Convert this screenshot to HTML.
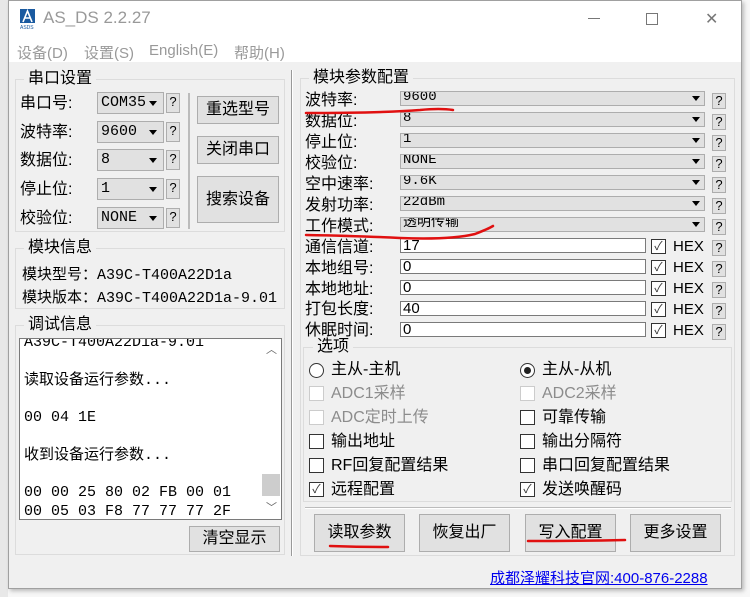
<!DOCTYPE html>
<html><head><meta charset="utf-8"><style>
*{margin:0;padding:0;box-sizing:border-box}
body{width:750px;height:597px;overflow:hidden;background:#f7f7f7;font-family:"Liberation Sans","Noto Sans CJK SC",sans-serif;color:#000;position:relative}
.a{position:absolute;white-space:nowrap}
.m{font-family:"Liberation Mono","Noto Sans CJK SC",monospace}
.win{position:absolute;left:8px;top:0;width:734px;height:589px;background:#f0f0f0;border:1px solid #a0a0a0;box-shadow:2px 2px 4px rgba(0,0,0,.25)}
.title{position:absolute;left:8px;top:0;width:734px;height:62px;background:#fff;border:1px solid #a0a0a0;border-bottom:none}
.t{font-size:15px;line-height:20px}
.grp{position:absolute;border:1px solid #dcdcdc}
.gt{position:absolute;background:#f0f0f0;padding:0 4px;font-size:15px;line-height:18px}
.cb{position:absolute;background:#e1e1e1;border:1px solid #adadad;font-size:15px;line-height:20px;padding-left:3px;overflow:hidden;font-family:"Liberation Mono",monospace}
.cb:after{content:"";position:absolute;right:6px;top:50%;margin-top:-2px;border-left:4px solid transparent;border-right:4px solid transparent;border-top:5px solid #000}
.q{position:absolute;width:14px;background:#e1e1e1;border:1px solid #adadad;font-size:13px;text-align:center}
.btn{position:absolute;background:#e1e1e1;border:1px solid #adadad;font-size:16px;text-align:center}
.rc{position:absolute;background:#e1e1e1;border:1px solid #adadad;font-size:14px;line-height:11px;padding-left:2px;overflow:hidden;height:15px;font-family:"Liberation Mono","Noto Sans CJK SC",monospace}
.rc:after{content:"";position:absolute;right:4px;top:4px;border-left:4px solid transparent;border-right:4px solid transparent;border-top:5px solid #000}
.tf{position:absolute;background:#fff;border:1px solid #7a7a7a;font-size:15px;line-height:14px;padding-left:2px;overflow:hidden;height:15px;width:246px;left:400px}
.ck{position:absolute;width:15px;height:15px;border:1px solid #333;background:#fff;font-size:12px;line-height:13px;text-align:center;color:#333}
.dis{border-color:#ccc;color:#999}
.lab{font-size:16px;line-height:18px}
</style></head><body>
<div style="position:absolute;left:0;top:0;width:8px;height:597px;background:#e8e8e8"></div>
<div class="win"></div>
<div class="title"></div>
<div class="a" style="left:20px;top:9px;width:15px;height:20px;background:#fff">
<svg width="15" height="20"><rect x="0" y="0" width="15" height="14" fill="#1a5aa0"/><path d="M3 13 L7.5 2 L12 13 M5 9 H10" stroke="#fff" stroke-width="1.6" fill="none"/><text x="0" y="20" font-size="5" fill="#1a5aa0" font-family="Liberation Sans">ASDS</text></svg></div>
<div class="a" style="left:43px;top:8px;font-size:17px;color:#999">AS_DS 2.2.27</div>
<div class="a" style="left:588px;top:18px;width:12px;height:1px;background:#777"></div>
<div class="a" style="left:646px;top:13px;width:12px;height:12px;border:1px solid #777"></div>
<div class="a" style="left:705px;top:13px;font-size:16px;color:#777;line-height:14px">✕</div>
<div class="a" style="left:17px;top:42px;font-size:15px;color:#999">设备(D)</div>
<div class="a" style="left:84px;top:42px;font-size:15px;color:#999">设置(S)</div>
<div class="a" style="left:149px;top:42px;font-size:15px;color:#999">English(E)</div>
<div class="a" style="left:234px;top:42px;font-size:15px;color:#999">帮助(H)</div>

<div class="grp" style="left:15px;top:79px;width:270px;height:153px"></div>
<div class="gt a" style="left:24px;top:70px;font-size:16px">串口设置</div>
<div class="a lab" style="left:20px;top:95px">串口号:</div>
<div class="a lab" style="left:20px;top:124px">波特率:</div>
<div class="a lab" style="left:20px;top:152px">数据位:</div>
<div class="a lab" style="left:20px;top:181px">停止位:</div>
<div class="a lab" style="left:20px;top:210px">校验位:</div>
<div class="cb" style="left:97px;top:92px;width:67px;height:22px">COM35</div>
<div class="cb" style="left:97px;top:121px;width:67px;height:22px">9600</div>
<div class="cb" style="left:97px;top:149px;width:67px;height:22px">8</div>
<div class="cb" style="left:97px;top:178px;width:67px;height:22px">1</div>
<div class="cb" style="left:97px;top:207px;width:67px;height:22px">NONE</div>
<div class="q" style="left:166px;top:93px;height:20px">?</div>
<div class="q" style="left:166px;top:122px;height:20px">?</div>
<div class="q" style="left:166px;top:150px;height:20px">?</div>
<div class="q" style="left:166px;top:179px;height:20px">?</div>
<div class="q" style="left:166px;top:208px;height:20px">?</div>
<div class="a" style="left:188px;top:93px;width:2px;height:136px;background:#bbb"></div>
<div class="btn" style="left:197px;top:96px;width:82px;height:28px;line-height:26px">重选型号</div>
<div class="btn" style="left:197px;top:136px;width:82px;height:28px;line-height:26px">关闭串口</div>
<div class="btn" style="left:197px;top:176px;width:82px;height:47px;line-height:45px">搜索设备</div>

<div class="grp" style="left:15px;top:248px;width:270px;height:61px"></div>
<div class="gt a" style="left:24px;top:239px;font-size:16px">模块信息</div>
<div class="a m" style="left:22px;top:263px;font-size:15px">模块型号：A39C-T400A22D1a</div>
<div class="a m" style="left:22px;top:286px;font-size:15px;width:258px;overflow:hidden">模块版本：A39C-T400A22D1a-9.01</div>

<div class="grp" style="left:15px;top:325px;width:270px;height:230px"></div>
<div class="gt a" style="left:24px;top:316px;font-size:16px">调试信息</div>
<div class="a" style="left:19px;top:338px;width:263px;height:182px;background:#fff;border:1px solid #7a7a7a;overflow:hidden">
<div class="m" style="position:absolute;left:4px;top:-5px;font-size:15px;line-height:18.8px;white-space:pre">A39C-T400A22D1a-9.01

读取设备运行参数...

00 04 1E

收到设备运行参数...

00 00 25 80 02 FB 00 01
00 05 03 F8 77 77 77 2F</div>
<div style="position:absolute;right:0;top:0;width:20px;height:180px;background:#fff"></div>
<div style="position:absolute;right:1px;top:135px;width:18px;height:22px;background:#cdcdcd"></div>
<div style="position:absolute;right:4px;top:2px;font-size:11px;color:#666">︿</div>
<div style="position:absolute;right:4px;top:160px;font-size:11px;color:#666">﹀</div>
</div>
<div class="btn" style="left:189px;top:526px;width:91px;height:26px;line-height:24px">清空显示</div>

<div class="a" style="left:291px;top:70px;width:2px;height:486px;background:#999;border-right:1px solid #fff"></div>
<div class="grp" style="left:300px;top:78px;width:435px;height:478px"></div>
<div class="gt a" style="left:309px;top:69px;font-size:16px">模块参数配置</div>
<div class="a lab" style="left:305px;top:92px">波特率:</div>
<div class="a lab" style="left:305px;top:113px">数据位:</div>
<div class="a lab" style="left:305px;top:134px">停止位:</div>
<div class="a lab" style="left:305px;top:155px">校验位:</div>
<div class="a lab" style="left:305px;top:176px">空中速率:</div>
<div class="a lab" style="left:305px;top:197px">发射功率:</div>
<div class="a lab" style="left:305px;top:218px">工作模式:</div>
<div class="a lab" style="left:305px;top:239px">通信信道:</div>
<div class="a lab" style="left:305px;top:260px">本地组号:</div>
<div class="a lab" style="left:305px;top:281px">本地地址:</div>
<div class="a lab" style="left:305px;top:301px">打包长度:</div>
<div class="a lab" style="left:305px;top:322px">休眠时间:</div>
<div class="rc" style="left:400px;top:91px;width:305px">9600</div>
<div class="rc" style="left:400px;top:112px;width:305px">8</div>
<div class="rc" style="left:400px;top:133px;width:305px">1</div>
<div class="rc" style="left:400px;top:154px;width:305px">NONE</div>
<div class="rc" style="left:400px;top:175px;width:305px">9.6K</div>
<div class="rc" style="left:400px;top:196px;width:305px">22dBm</div>
<div class="rc" style="left:400px;top:217px;width:305px">透明传输</div>
<div class="tf" style="top:238px">17</div>
<div class="tf" style="top:259px">0</div>
<div class="tf" style="top:280px">0</div>
<div class="tf" style="top:301px">40</div>
<div class="tf" style="top:322px">0</div>
<div class="ck" style="left:651px;top:239px">✓</div><div class="a t" style="left:673px;top:237px;font-size:15px">HEX</div>
<div class="ck" style="left:651px;top:260px">✓</div><div class="a t" style="left:673px;top:258px;font-size:15px">HEX</div>
<div class="ck" style="left:651px;top:281px">✓</div><div class="a t" style="left:673px;top:279px;font-size:15px">HEX</div>
<div class="ck" style="left:651px;top:302px">✓</div><div class="a t" style="left:673px;top:300px;font-size:15px">HEX</div>
<div class="ck" style="left:651px;top:323px">✓</div><div class="a t" style="left:673px;top:321px;font-size:15px">HEX</div>
<div class="q" style="left:712px;top:93px;height:16px;line-height:14px">?</div>
<div class="q" style="left:712px;top:114px;height:16px;line-height:14px">?</div>
<div class="q" style="left:712px;top:135px;height:16px;line-height:14px">?</div>
<div class="q" style="left:712px;top:156px;height:16px;line-height:14px">?</div>
<div class="q" style="left:712px;top:177px;height:16px;line-height:14px">?</div>
<div class="q" style="left:712px;top:198px;height:16px;line-height:14px">?</div>
<div class="q" style="left:712px;top:219px;height:16px;line-height:14px">?</div>
<div class="q" style="left:712px;top:240px;height:16px;line-height:14px">?</div>
<div class="q" style="left:712px;top:261px;height:16px;line-height:14px">?</div>
<div class="q" style="left:712px;top:282px;height:16px;line-height:14px">?</div>
<div class="q" style="left:712px;top:303px;height:16px;line-height:14px">?</div>
<div class="q" style="left:712px;top:324px;height:16px;line-height:14px">?</div>

<div class="grp" style="left:303px;top:347px;width:429px;height:155px"></div>
<div class="gt a" style="left:313px;top:338px;font-size:16px">选项</div>
<div class="a" style="left:309px;top:363px;width:15px;height:15px;border:1px solid #333;border-radius:50%;background:#fff"></div>
<div class="a lab" style="left:331px;top:361px">主从-主机</div>
<div class="a" style="left:520px;top:363px;width:15px;height:15px;border:1px solid #333;border-radius:50%;background:#fff"><div style="margin:3px;width:7px;height:7px;border-radius:50%;background:#222"></div></div>
<div class="a lab" style="left:542px;top:361px">主从-从机</div>
<div class="ck dis" style="left:309px;top:386px"></div><div class="a lab" style="left:331px;top:385px;color:#8c8c8c">ADC1采样</div>
<div class="ck dis" style="left:520px;top:386px"></div><div class="a lab" style="left:542px;top:385px;color:#8c8c8c">ADC2采样</div>
<div class="ck dis" style="left:309px;top:410px"></div><div class="a lab" style="left:331px;top:409px;color:#8c8c8c">ADC定时上传</div>
<div class="ck" style="left:520px;top:410px"></div><div class="a lab" style="left:542px;top:409px">可靠传输</div>
<div class="ck" style="left:309px;top:434px"></div><div class="a lab" style="left:331px;top:433px">输出地址</div>
<div class="ck" style="left:520px;top:434px"></div><div class="a lab" style="left:542px;top:433px">输出分隔符</div>
<div class="ck" style="left:309px;top:458px"></div><div class="a lab" style="left:331px;top:457px">RF回复配置结果</div>
<div class="ck" style="left:520px;top:458px"></div><div class="a lab" style="left:542px;top:457px">串口回复配置结果</div>
<div class="ck" style="left:309px;top:482px">✓</div><div class="a lab" style="left:331px;top:481px">远程配置</div>
<div class="ck" style="left:520px;top:482px">✓</div><div class="a lab" style="left:542px;top:481px">发送唤醒码</div>
<div class="a" style="left:305px;top:507px;width:426px;height:2px;background:#bbb;border-bottom:1px solid #fff"></div>
<div class="btn" style="left:314px;top:514px;width:91px;height:38px;line-height:36px">读取参数</div>
<div class="btn" style="left:419px;top:514px;width:91px;height:38px;line-height:36px">恢复出厂</div>
<div class="btn" style="left:525px;top:514px;width:91px;height:38px;line-height:36px">写入配置</div>
<div class="btn" style="left:630px;top:514px;width:91px;height:38px;line-height:36px">更多设置</div>
<div class="a" style="left:490px;top:567px;font-size:15px;color:#0000ee;text-decoration:underline">成都泽耀科技官网:400-876-2288</div>

<svg class="a" style="left:0;top:0" width="750" height="597">
<g stroke="#e01010" stroke-width="2.5" fill="none" stroke-linecap="round">
<path d="M306 113 Q380 113 420 110 Q440 108 453 110"/>
<path d="M306 235 Q360 236 400 238 Q450 240 475 234 Q488 229 493 226"/>
<path d="M330 546 Q360 547 388 547"/>
<path d="M528 541 Q580 541 625 540"/>
</g></svg>
</body></html>
